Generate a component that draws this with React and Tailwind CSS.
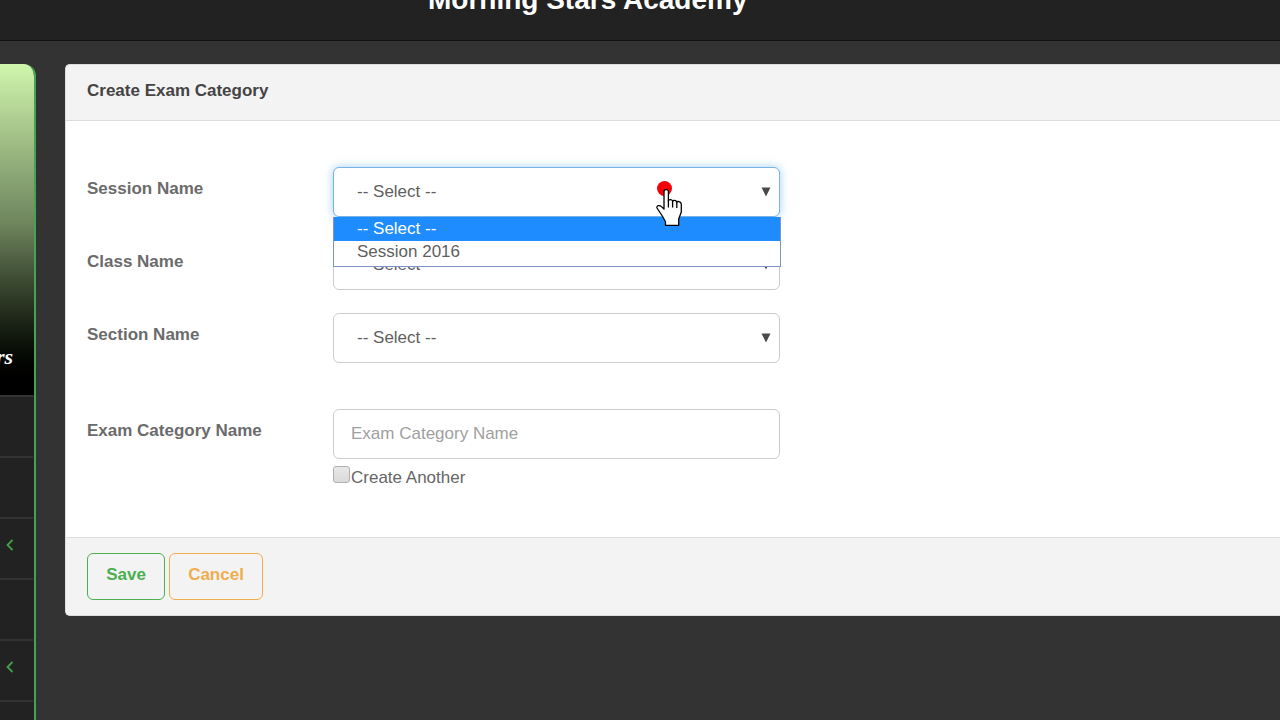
function Field({ id, label, className = "", children }) {
  return (
    <div className={"grid grid-cols-[246px_minmax(0,447px)] " + className}>
      <label htmlFor={id} className="pt-3 font-bold leading-5 text-[#6b6b6b]">
        {label}
      </label>
      <div className="relative">{children}</div>
    </div>
  );
}

function SelectBox({ id, open = false, options = [] }) {
  return (
    <>
      <select
        id={id}
        className={
          "block h-[50px] w-full appearance-none rounded-md border bg-white pl-[23px] pr-8 text-[#5f5f5f] outline-none " +
          (open
            ? "border-[#76b3e6] shadow-[0_0_10px_rgba(102,175,233,0.6)]"
            : "border-[#cccccc]")
        }
      >
        <option>-- Select --</option>
        {options.map((o) => (
          <option key={o}>{o}</option>
        ))}
      </select>
      <svg
        viewBox="0 0 10 10"
        className="pointer-events-none absolute right-[9px] top-5 size-[10px]"
        aria-hidden="true"
      >
        <path d="M0.5 0.5h9L5 9.5z" fill="#4a4a4a" />
      </svg>
      {open && (
        <ul
          role="listbox"
          className="absolute -right-px left-0 top-[50px] z-10 border border-t-0 border-[#7d93c9] bg-white leading-6 text-[#5f5f5f]"
        >
          <li role="option" aria-selected="true" className="bg-[#1e8cff] px-[23px] text-white">
            -- Select --
          </li>
          {options.map((o) => (
            <li key={o} role="option" aria-selected="false" className="px-[23px] pb-1 leading-[21px]">
              {o}
            </li>
          ))}
        </ul>
      )}
    </>
  );
}

function Pointer() {
  return (
    <svg
      viewBox="0 0 28 48"
      className="pointer-events-none absolute left-[323px] top-3 z-20 h-12 w-7"
      aria-hidden="true"
    >
      <circle cx="8.5" cy="9.5" r="7.5" fill="#f50008" />
      <path
        d="M8 30V12.500c0-2.600 4.400-2.600 4.400 0v9.300c.3-1.800 4-1.600 4.200.5.300-1.600 3.900-1.200 4.200.9.400-1.200 4.200-.8 4.500 2V33l-2.600 7v6.300H9.500v-3.500L6.300 37l-5.300-8c-.8-2.400 2.500-3.300 4.500-1.400z"
        fill="#fff"
        stroke="#000"
        strokeWidth="1.3"
        strokeLinejoin="round"
      />
      <path d="M12.400 21v7.500M16.600 22v6.500M20.800 23v6" stroke="#000" strokeWidth="1.300" />
    </svg>
  );
}

function Sidebar() {
  const items = [false, false, true, false, true, false];
  return (
    <aside className="flex w-9 shrink-0 flex-col overflow-hidden rounded-tr-xl border-r-2 border-[#43a554] bg-[#222222]">
      <div className="flex h-[331px] shrink-0 items-end bg-linear-to-b from-[#d0f6ad] via-[#6f865e] via-48% to-black pb-7">
        <span className="-ml-1 font-['Liberation_Serif',serif] text-[22px] font-bold italic leading-5 text-white">
          rs
        </span>
      </div>
      <nav className="shrink-0">
        {items.map((expandable, i) => (
          <a
            key={i}
            href="#"
            aria-label={"Menu " + (i + 1)}
            className="mr-px flex h-[61px] items-center border-t-2 border-[#333333] pl-[6px]"
          >
            {expandable && (
              <svg viewBox="0 0 8 12" className="-mt-2 h-3 w-2" aria-hidden="true">
                <path d="M6.500 1L1.500 6l5 5" fill="none" stroke="#43a047" strokeWidth="1.800" />
              </svg>
            )}
          </a>
        ))}
      </nav>
    </aside>
  );
}

export default function App() {
  return (
    <div className="flex h-screen flex-col overflow-hidden bg-[#333333] font-['Liberation_Sans',sans-serif] text-[17px]">
      <header className="h-[41px] shrink-0 border-b border-[#111111] bg-[#222222] pl-[428px]">
        <h1 className="-mt-4 text-[28px] font-bold leading-8 text-white">Morning Stars Academy</h1>
      </header>
      <div className="flex min-h-0 flex-1 items-stretch gap-[29px] pt-[23px]">
        <Sidebar />
        <main className="min-w-0 flex-1">
          <form
            className="rounded-l-[5px] border border-r-0 border-[#dddddd] bg-white"
            onSubmit={(e) => e.preventDefault()}
          >
            <h2 className="rounded-tl border-b border-[#dddddd] bg-[#f3f3f3] px-[21px] pb-[17px] pt-[14px] font-bold leading-6 text-[#444444]">
              Create Exam Category
            </h2>
            <div className="px-[21px] pb-[47px] pt-[46px]">
              <Field id="session" label="Session Name">
                <SelectBox id="session" open options={["Session 2016"]} />
                <Pointer />
              </Field>
              <Field id="class" label="Class Name" className="mt-[23px]">
                <SelectBox id="class" />
              </Field>
              <Field id="section" label="Section Name" className="mt-[23px]">
                <SelectBox id="section" />
              </Field>
              <Field id="category" label="Exam Category Name" className="mt-[46px]">
                <input
                  id="category"
                  type="text"
                  placeholder="Exam Category Name"
                  className="block h-[50px] w-full rounded-md border border-[#cccccc] px-[17px] text-[#5f5f5f] outline-none placeholder:text-[#a0a0a0]"
                />
                <label className="flex pt-[7px] leading-6 text-[#666666]">
                  <input
                    type="checkbox"
                    className="mr-px size-[17px] appearance-none rounded-[3px] border border-[#b0b0b0] bg-linear-to-b from-[#e8e8e8] to-[#dadada]"
                  />
                  Create Another
                </label>
              </Field>
            </div>
            <div className="flex gap-1 rounded-bl border-t border-[#dddddd] bg-[#f3f3f3] px-[21px] py-[15px] font-bold">
              <button
                type="submit"
                className="h-[47px] w-[78px] rounded-md border border-[#4caf50] pb-1 text-[#4caf50]"
              >
                Save
              </button>
              <button
                type="button"
                className="h-[47px] w-[94px] rounded-md border border-[#f0ad4e] pb-1 text-[#f0ad4e]"
              >
                Cancel
              </button>
            </div>
          </form>
        </main>
      </div>
    </div>
  );
}
